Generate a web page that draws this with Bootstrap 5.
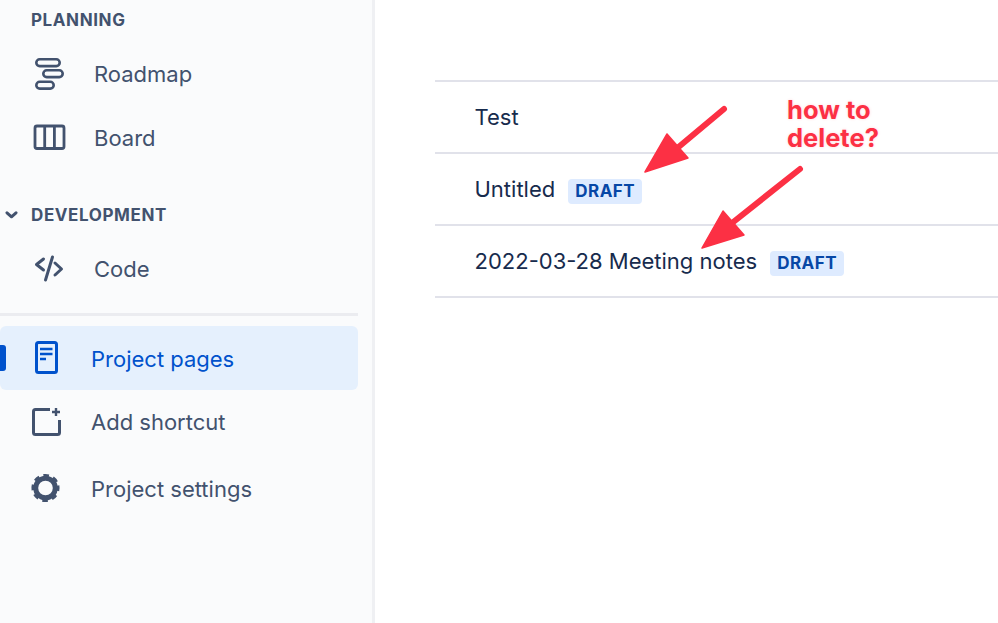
<!DOCTYPE html>
<html lang="en">
<head>
<meta charset="utf-8">
<title>Project pages</title>
<link rel="stylesheet" href="https://cdn.jsdelivr.net/npm/bootstrap@5.3.0/dist/css/bootstrap.min.css">
<style>
html,body{height:623px;overflow:hidden;background:#fff;font-family:Inter,"Noto Sans",sans-serif;}
.stage{height:623px;position:relative;}
.side{width:375px;flex:none;background:#FAFBFC;border-right:3px solid #EFF0F3;padding-right:14px;color:#42526E;}
.sec-head{font-size:17px;font-weight:700;letter-spacing:.6px;color:#42526E;padding-left:31px;display:flex;align-items:center;position:relative;line-height:20px;}
.sec-plan{height:40px;margin-bottom:2px;}
.sec-dev{height:34px;margin-top:28px;margin-bottom:5px;}
.sec-dev svg{position:absolute;left:5px;top:13px;}
.nav-row{height:64px;font-size:22px;color:#42526E;padding:0;display:flex;align-items:center;position:relative;}
.nav-row:hover{color:#42526E;}
.nav-row .ico{position:absolute;left:0;top:0;overflow:visible;}
.lab-a{padding-left:94px;}
.lab-b{padding-left:91px;}
.rule{height:3px;background:#EBECF0;margin:12px 0 10px;}
.nav-on{background:#E5F0FD;border-radius:6px;color:#0052CC;padding-top:2px;}
.nav-on:hover{color:#0052CC;}
.nav-on::before{content:"";position:absolute;left:0;top:19px;width:6px;height:26px;background:#0052CC;border-radius:0 3px 3px 0;}
.nav-last{margin-top:3px;}
.main-area{flex:1;padding:80px 0 0 60px;}
.page-list{border-top:2px solid #E1E2EA;border-radius:0;}
.list-group-flush>.page-row,.list-group-flush>.page-row:last-child{height:72px;padding:0 0 0 39.500px;border:0;border-bottom:2px solid #E1E2EA;font-size:22px;color:#172B4D;display:flex;align-items:center;gap:13px;}
.draft{background:#DEEBFF;color:#0747A6;font-size:17px;font-weight:700;letter-spacing:.5px;border-radius:4px;padding:0 7px;height:25px;line-height:25px;margin-top:4px;}
.note{position:absolute;left:787px;top:96px;color:#FC3044;font-size:25.500px;font-weight:700;line-height:28px;text-shadow:0 0 3px rgba(252,48,68,.2);}
.arrows{position:absolute;left:0;top:0;pointer-events:none;}
</style>
</head>
<body>
<div class="stage d-flex">
  <aside class="side">
    <div class="sec-head sec-plan">PLANNING</div>
    <nav class="nav flex-column">
      <a class="nav-link nav-row lab-a" href="#">
        <svg class="ico" width="100" height="64" fill="none" stroke="#42526E" stroke-width="2.600">
          <rect x="36.300" y="17.300" width="23.400" height="6.800" rx="3.400"/>
          <rect x="43.300" y="28.300" width="19.400" height="6.800" rx="3.400"/>
          <rect x="36.300" y="39.800" width="17.400" height="6.800" rx="3.400"/>
        </svg>Roadmap</a>
      <a class="nav-link nav-row lab-a" href="#">
        <svg class="ico" width="100" height="64" fill="none" stroke="#42526E" stroke-width="2.800">
          <rect x="35" y="20" width="29" height="22.500" rx="2"/>
          <path d="M44.700 20v22.500M54.400 20v22.500"/>
        </svg>Board</a>
    </nav>
    <div class="sec-head sec-dev">
      <svg width="13" height="8" fill="none" stroke="#42526E" stroke-width="3" stroke-linecap="round" stroke-linejoin="round"><path d="M2 1.800l4.500 4 4.500-4"/></svg>DEVELOPMENT</div>
    <nav class="nav flex-column">
      <a class="nav-link nav-row lab-a" href="#">
        <svg class="ico" width="100" height="64" fill="none" stroke="#42526E" stroke-width="3" stroke-linecap="round" stroke-linejoin="round">
          <path d="M43.500 22l-7 5.500 7 5.500M55 26l6.500 6-6.500 6M52.500 20l-7 23"/>
        </svg>Code</a>
    </nav>
    <div class="rule"></div>
    <nav class="nav flex-column">
      <a class="nav-link nav-row lab-b nav-on" href="#" aria-current="page">
        <svg class="ico" width="100" height="64" fill="none" stroke="#0052CC" stroke-width="3">
          <rect x="36.500" y="16.500" width="20" height="30" rx="2"/>
          <path d="M40 23h12.500M40 28h12.500M40 33h6" stroke-width="2.400"/>
        </svg>Project pages</a>
      <a class="nav-link nav-row lab-b" href="#">
        <svg class="ico" width="100" height="64" fill="none" stroke="#42526E">
          <path d="M50 19.500H35.500a2 2 0 0 0-2 2V42.500a2 2 0 0 0 2 2H57.500a2 2 0 0 0 2-2V30" stroke-width="3"/>
          <path d="M56 18v8M52 22h8" stroke-width="2.400"/>
        </svg>Add shortcut</a>
      <a class="nav-link nav-row lab-b nav-last" href="#">
        <svg class="ico" width="100" height="64" fill="none" stroke="#42526E">
          <circle cx="45.500" cy="31" r="9.800" stroke-width="5"/>
          <circle cx="45.500" cy="31" r="12.300" stroke-width="3.600" stroke-dasharray="5.300 4.360" transform="rotate(-11 45.500 31)"/>
        </svg>Project settings</a>
    </nav>
  </aside>
  <main class="main-area">
    <ul class="list-group list-group-flush page-list">
      <li class="list-group-item page-row">Test</li>
      <li class="list-group-item page-row">Untitled <span class="draft">DRAFT</span></li>
      <li class="list-group-item page-row">2022-03-28 Meeting notes <span class="draft">DRAFT</span></li>
    </ul>
  </main>
  <svg class="arrows" width="998" height="623" fill="#FC3044" stroke="#FC3044" stroke-linejoin="round">
    <path d="M724 109L675 150" stroke-width="6" stroke-linecap="round"/>
    <path d="M645 172L667 134L688 158Z" stroke-width="1.500"/>
    <path d="M800 169L722 231" stroke-width="6" stroke-linecap="round"/>
    <path d="M702 248L723 211L744 235Z" stroke-width="1.500"/>
  </svg>
  <div class="note">how to<br>delete?</div>
</div>
<script src="https://cdn.jsdelivr.net/npm/bootstrap@5.3.0/dist/js/bootstrap.bundle.min.js"></script>
</body>
</html>
